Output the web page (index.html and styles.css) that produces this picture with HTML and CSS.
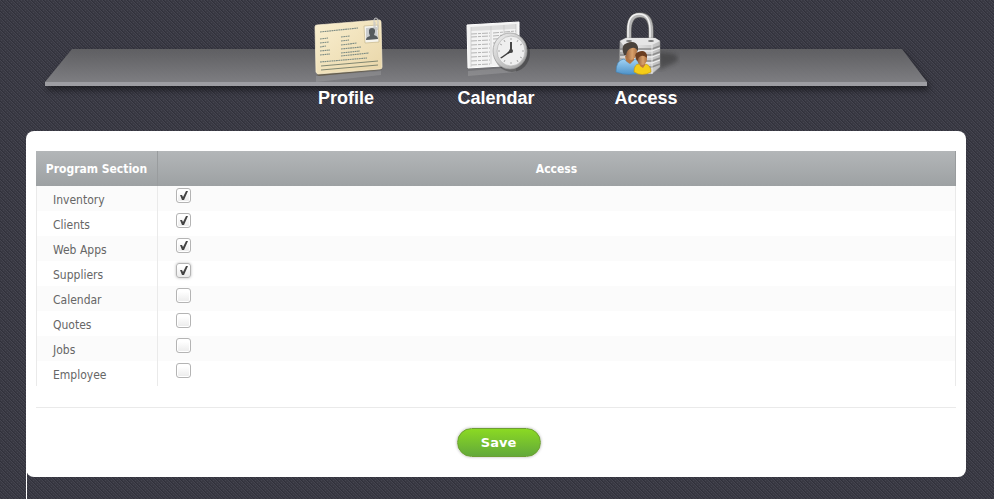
FILE: index.html
```html
<!DOCTYPE html>
<html lang="en">
<head>
    <meta charset="UTF-8">
    <meta name="viewport" content="width=device-width, initial-scale=1.0">
    <title>Employee Access</title>
    <link rel="stylesheet" href="styles.css">
</head>
<body>
    <!-- Icon Shelf -->
    <nav class="dock">
        <svg class="shelf" viewBox="0 0 882 44" preserveAspectRatio="none" aria-hidden="true">
            <defs>
                <linearGradient id="shelfTop" x1="0" y1="0" x2="0" y2="1">
                    <stop offset="0" stop-color="#626265"/>
                    <stop offset="1" stop-color="#87878b"/>
                </linearGradient>
            </defs>
            <path d="M27 0H857L882 33V37H0V33Z" fill="url(#shelfTop)" fill-opacity=".94"/>
            <path d="M0 33H882V37H0Z" fill="#9d9da2"/>
        </svg>
        <ul class="dock-list">
            <li>
                <a href="#profile">
                    <svg class="dock-icon" viewBox="0 0 80 72" aria-hidden="true">
                        <defs>
                            <linearGradient id="card" x1="0" y1="0" x2="1" y2="1">
                                <stop offset="0" stop-color="#f9efd0"/>
                                <stop offset="1" stop-color="#e9d6a8"/>
                            </linearGradient>
                        </defs>
                        <path d="M10 66L75 61V65L10 72Z" fill="#bbb" opacity=".25"/>
                        <path d="M10 19Q9 17 11 17L73 10Q75 10 75 12L76 58Q76 60 74 60L13 66Q11 66 11 64Z" fill="#5c5032" opacity=".6"/>
                        <path d="M9 17Q9 15 11 15L73 10Q75 10 75 12L76 57Q76 59 74 59L12 64Q11 64 10 62Z" fill="url(#card)" stroke="#fff4d4" stroke-width=".7"/>
                        <g fill="none" stroke="#7d8c84" stroke-width="1.1" stroke-dasharray="1.8 .5">
                            <path d="M14 22L52 18"/>
                            <path d="M14 29L22 28M14 33L23 32M14 37L20 36M14 41L24 40M14 45L24 44"/>
                            <path d="M35 27L44 26M35 31L43 30M35 35L51 33M35 39L55 37M35 43L54 41M35 46L63 43"/>
                            <path d="M14 52L61 48"/>
                        </g>
                        <path d="M15 56L72 51M15 60L72 55" fill="none" stroke="#65705f" stroke-width=".8"/>
                        <path d="M58 16L72 15L73 32L59 33Z" fill="#f6f4ec" stroke="#c0ae80" stroke-width=".6"/>
                        <path d="M60 18L71 17L72 29L60 30Z" fill="#c9ccce"/>
                        <path d="M60 30Q60 27 64 26Q61 18 66 18Q71 18 68 25Q72 26 72 29Z" fill="#555b5e"/>
                        <path d="M68 18V10Q68 8 70 8Q72 8 72 11V18Q72 20 70 20Q69 20 69 18V12" fill="none" stroke="#c6c6c6" stroke-width="1"/>
                    </svg>
                    <span>Profile</span>
                </a>
            </li>
            <li>
                <a href="#calendar">
                    <svg class="dock-icon" viewBox="0 0 80 72" aria-hidden="true">
                        <defs>
                            <linearGradient id="rim" x1="0" y1="0" x2="1" y2="1">
                                <stop offset="0" stop-color="#f4f4f4"/>
                                <stop offset="1" stop-color="#9d9d9d"/>
                            </linearGradient>
                        </defs>
                        <path d="M12 61L60 57V62L12 66Z" fill="#ddd" opacity=".2"/>
                        <path d="M11 15L63 12V55L12 58Z" fill="#f3f3f3" stroke="#fff"/>
                        <path d="M15 17L60 14V19L15 21Z" fill="#dcdcdc"/>
                        <g fill="none" stroke="#b4b4b4" stroke-width="1" stroke-dasharray="6 1 3 1">
                            <path d="M15 24L34 23M37 23L60 21M15 27L34 26M37 26L60 24M15 31L34 30M37 29L60 28M15 35L34 34M37 33L60 32"/>
                            <path d="M15 39L34 38M15 43L34 42M15 47L34 46M15 51L34 50M15 55L34 54"/>
                        </g>
                        <path d="M15 17V57M35 16V54M48 15V30M60 14V27" fill="none" stroke="#c4c4c4" stroke-width=".7"/>
                        <ellipse cx="56" cy="43" rx="18" ry="19" fill="#222" opacity=".35"/>
                        <ellipse cx="54" cy="41" rx="17" ry="18" fill="url(#rim)" stroke="#999" stroke-width=".7"/>
                        <ellipse cx="55" cy="41" rx="14" ry="15" fill="#efefef" stroke="#bbb" stroke-width=".8"/>
                        <g stroke="#aaa" stroke-width="1">
                            <path d="M55 28V30M55 52V54M42 41H44M66 41H68M48 30L49 32M62 30L61 32M44 34L46 35M66 34L64 35M44 48L46 47M66 48L64 47M48 52L49 50M62 52L61 50"/>
                        </g>
                        <path d="M55 41L45 48" fill="none" stroke="#3e3e3e" stroke-width="1.4"/>
                        <path d="M55 32V41L52 43" fill="none" stroke="#333" stroke-width="1.8"/>
                        <circle cx="55" cy="41" r="2" fill="#444"/>
                    </svg>
                    <span>Calendar</span>
                </a>
            </li>
            <li>
                <a href="#access">
                    <svg class="dock-icon" viewBox="6 0 80 72" aria-hidden="true">
                        <defs>
                            <linearGradient id="steel" x1="0" y1="0" x2="1" y2="0">
                                <stop offset="0" stop-color="#a2a2a2"/>
                                <stop offset=".35" stop-color="#e9e9e9"/>
                                <stop offset="1" stop-color="#bcbcbc"/>
                            </linearGradient>
                            <linearGradient id="skin" x1="0" y1="0" x2="1" y2="0">
                                <stop offset="0" stop-color="#8b5837"/>
                                <stop offset=".6" stop-color="#d8a16c"/>
                                <stop offset="1" stop-color="#ae7040"/>
                            </linearGradient>
                            <linearGradient id="blue" x1="0" y1="0" x2="0" y2="1">
                                <stop offset="0" stop-color="#a1d3f5"/>
                                <stop offset="1" stop-color="#4e92c8"/>
                            </linearGradient>
                            <filter id="soft"><feGaussianBlur stdDeviation="2"/></filter>
                        </defs>
                        <path d="M58 42L74 44Q82 49 74 53L59 60Z" fill="#222" opacity=".4" filter="url(#soft)"/>
                        <path d="M29 32V21Q29 5 40 5Q51 5 51 21V32" fill="none" stroke="#606060" stroke-width="5.4"/>
                        <path d="M29 32V21Q29 5 40 5Q51 5 51 21V32" fill="none" stroke="#b5b5b5" stroke-width="4.2"/>
                        <path d="M28 32V20Q28 4 39 4Q50 4 50 20V32" fill="none" stroke="#f2f2f2" stroke-width="1.5"/>
                        <path d="M20 31L26 28H55L60 31V57L52 64H23L19 60Z" fill="url(#steel)" stroke="#8f8f8f" stroke-width=".5"/>
                        <path d="M20 31L26 28H55L60 31L52 35H23Z" fill="#e6e6e6"/>
                        <ellipse cx="29" cy="31" rx="3" ry="1" fill="#777"/>
                        <ellipse cx="51" cy="31" rx="3" ry="1" fill="#777"/>
                        <path d="M20 39H52L60 36M20 45H52L60 42M20 51H52L60 48M20 57H52L60 54" fill="none" stroke="#8c8c8c" stroke-width="1.6"/>
                        <path d="M20 41H52L60 38M20 47H52L60 44M20 53H52L60 50" fill="none" stroke="#f2f2f2" stroke-width="1"/>
                        <path d="M52 35V64" stroke="#f0f0f0" stroke-width=".8"/>
                        <path d="M16 62Q16 50 24 49L29 53L35 49Q43 50 43 62Q29 67 16 62Z" fill="url(#blue)" stroke="#3f7eaf" stroke-width=".6"/>
                        <path d="M25 46L26 51L30 54L34 50V45Z" fill="#b27545"/>
                        <ellipse cx="31" cy="41" rx="6" ry="9" fill="url(#skin)"/>
                        <path d="M24 45Q20 35 27 33Q36 30 38 37V42Q36 37 32 38Q27 39 26 45Z" fill="#49423c"/>
                        <path d="M34 62Q34 54 39 54L42 57L46 54Q51 56 51 62Q42 67 34 62Z" fill="#f5cd18" stroke="#be930a" stroke-width=".6"/>
                        <path d="M39 52L40 56L43 58L45 55V51Z" fill="#bd7842"/>
                        <ellipse cx="42" cy="49" rx="5" ry="6" fill="url(#skin)"/>
                        <path d="M37 51Q33 44 38 42Q45 39 47 45V48Q44 45 41 46Q38 47 38 50Z" fill="#6b3e21"/>
                    </svg>
                    <span>Access</span>
                </a>
            </li>
        </ul>
    </nav>

    <main class="content">
        <form class="panel">
            <!-- Access Table -->
            <table class="access-table">
                <thead>
                    <tr>
                        <th class="section-col">Program Section</th>
                        <th>Access</th>
                    </tr>
                </thead>
                <tbody>
                    <tr>
                        <td><label for="inventory">Inventory</label></td>
                        <td><input type="checkbox" id="inventory" checked></td>
                    </tr>
                    <tr>
                        <td><label for="clients">Clients</label></td>
                        <td><input type="checkbox" id="clients" checked></td>
                    </tr>
                    <tr>
                        <td><label for="webapps">Web Apps</label></td>
                        <td><input type="checkbox" id="webapps" checked></td>
                    </tr>
                    <tr>
                        <td><label for="suppliers">Suppliers</label></td>
                        <td><input type="checkbox" id="suppliers" class="active" checked></td>
                    </tr>
                    <tr>
                        <td><label for="calendar-access">Calendar</label></td>
                        <td><input type="checkbox" id="calendar-access"></td>
                    </tr>
                    <tr>
                        <td><label for="quotes">Quotes</label></td>
                        <td><input type="checkbox" id="quotes"></td>
                    </tr>
                    <tr>
                        <td><label for="jobs">Jobs</label></td>
                        <td><input type="checkbox" id="jobs"></td>
                    </tr>
                    <tr>
                        <td><label for="employee">Employee</label></td>
                        <td><input type="checkbox" id="employee"></td>
                    </tr>
                </tbody>
            </table>

            <div class="form-actions">
                <button type="button" class="save-button">Save</button>
            </div>
        </form>
        <div class="edge"></div>
    </main>
</body>
</html>
```
FILE: styles.css
```css
/* Global Styles */
* {
    box-sizing: border-box;
}

body {
    display: flex;
    flex-direction: column;
    min-height: 100vh;
    margin: 0;
    font-family: "DejaVu Sans Condensed", Tahoma, sans-serif;
    font-size: 12px;
    color: #666;
    background-color: #393943;
    background-image: url("data:image/svg+xml,%3Csvg xmlns='http://www.w3.org/2000/svg' width='6' height='6' shape-rendering='crispEdges'%3E%3Cpath d='M0 0h1v1H0zM1 1h1v1H1zM2 2h1v1H2zM3 3h1v1H3zM4 4h1v1H4zM5 5h1v1H5zM3 0h1v1H3zM5 2h1v1H5zM1 4h1v1H1z' fill='%23454550'/%3E%3Cpath d='M1 0h1v1H1zM3 2h1v1H3zM5 4h1v1H5zM0 5h1v1H0zM2 1h1v1H2zM4 3h1v1H4z' fill='%2330303a'/%3E%3C/svg%3E");
}

/* Icon Shelf */
.dock {
    position: relative;
    padding: 10px 2px 0 0;
    height: 131px;
}

.shelf {
    position: absolute;
    top: 49px;
    left: 45px;
    width: calc(100% - 112px);
    height: 44px;
    filter: drop-shadow(2px 4px 3px rgba(0, 0, 0, 0.5));
}

.dock-list {
    position: relative;
    display: flex;
    justify-content: center;
    margin: 0;
    padding: 0;
    list-style: none;
}

.dock-list li {
    width: 150px;
}

.dock-list a {
    display: flex;
    flex-direction: column;
    align-items: center;
    gap: 5px;
    color: #fff;
    font-family: "Liberation Sans", Arial, sans-serif;
    font-size: 18px;
    font-weight: bold;
    line-height: 22px;
    text-decoration: none;
}

.dock-icon {
    width: 80px;
    height: 72px;
}

/* Content Panel */
.content {
    display: flex;
    flex: 1;
    flex-direction: column;
    margin: 0 28px 0 26px;
}

.panel {
    padding: 20px 10px;
    background-color: #fff;
    border-radius: 8px;
}

.edge {
    flex: 1;
    margin-top: -8px;
    border-left: 1px solid #fff;
}

/* Table Styles */
.access-table {
    width: 100%;
    border-collapse: separate;
    border-spacing: 0;
}

th {
    height: 35px;
    padding: 0;
    border-right: 1px solid #999c9e;
    background: linear-gradient(#b3b6b8, #9da1a3);
    color: #fff;
    text-align: center;
}

.section-col {
    width: 122px;
}

td {
    height: 25px;
    padding: 0 0 0 18px;
    border-right: 1px solid #eaeaea;
    line-height: 16px;
}

td:first-child {
    padding: 2px 0 0 16px;
    border-left: 1px solid #eaeaea;
}

tbody tr:nth-child(odd) {
    background-color: #fbfbfb;
}

input[type="checkbox"] {
    display: block;
    width: 15px;
    height: 15px;
    margin: 0 0 6px;
    appearance: none;
    border: 1px solid #b4b4b4;
    border-radius: 3px;
    background: linear-gradient(#fff 20%, #ebebeb);
    box-shadow: inset 0 0 0 1px #fff;
}

input[type="checkbox"]:checked {
    background: url("data:image/svg+xml,%3Csvg xmlns='http://www.w3.org/2000/svg' viewBox='0 0 13 13'%3E%3Cpath d='M3 6L5 6L6 8L9 2H11L7 11H5Z' fill='%23444'/%3E%3C/svg%3E"), linear-gradient(#fff 20%, #ebebeb);
}

input[type="checkbox"].active {
    box-shadow: 0 0 3px #bbb;
}

/* Save Button */
.form-actions {
    margin-top: 21px;
    padding: 20px 0 0 5px;
    border-top: 1px solid #eaeaea;
    text-align: center;
}

.save-button {
    width: 84px;
    height: 29px;
    padding: 0;
    border: 1px solid #6d9e32;
    border-radius: 15px;
    background: linear-gradient(#8bd923, #62a93a);
    box-shadow: 0 0 3px rgba(0, 0, 0, 0.3);
    color: #fff;
    font-family: "DejaVu Sans", Verdana, sans-serif;
    font-size: 13px;
    font-weight: bold;
    cursor: pointer;
}
```
